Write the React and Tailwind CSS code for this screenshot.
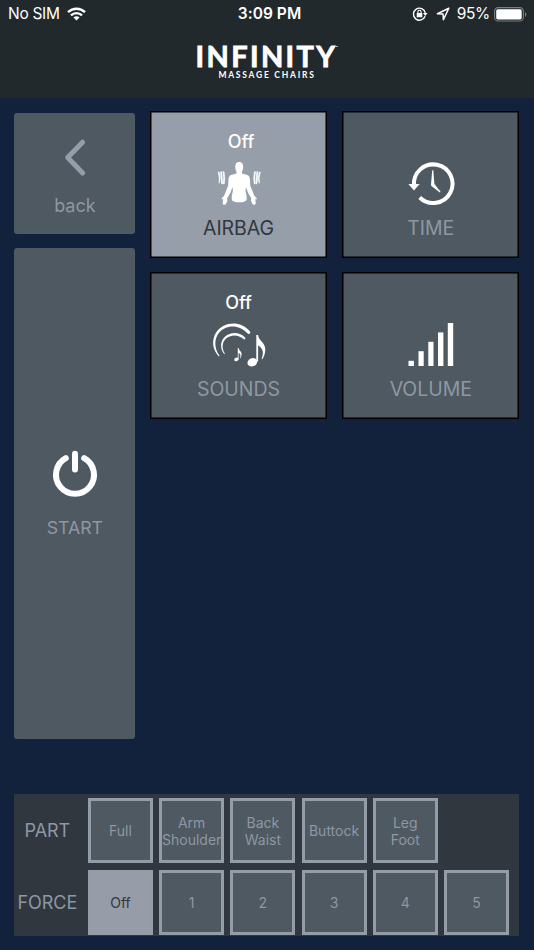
import React, { useState } from "react";

const PARTS = ["Full", "Arm\nShoulder", "Back\nWaist", "Buttock", "Leg\nFoot"];
const FORCES = ["Off", "1", "2", "3", "4", "5"];

function StatusBar() {
  return (
    <div className="grid h-7 grid-cols-3 items-center pl-2 pr-[7px] text-[15.5px] tracking-[-0.3px]">
      <div className="flex items-center gap-[7.5px]">
        <span>No SIM</span>
        <svg width="19" height="14" viewBox="0 0 19 14" fill="none" stroke="currentColor" strokeWidth="2.4">
          <path d="M1 5.2a12.2 12.2 0 0 1 17 0" />
          <path d="M4 8.4a7.8 7.8 0 0 1 11 0" />
          <path d="M9.5 13.4 6.5 10.4a4.2 4.2 0 0 1 6 0z" fill="currentColor" stroke="none" />
        </svg>
      </div>
      <span className="pl-1 text-center font-semibold tracking-[0.05px]">3:09 PM</span>
      <div className="flex items-center justify-end">
        <svg className="mr-[8px]" width="16" height="16" viewBox="0 0 16 16" fill="none" stroke="currentColor" strokeWidth="1.4">
          <path d="M13.1 10.2a6 6 0 1 1 .2-3.4" />
          <path d="M11 7h4.6l-2.3 3z" fill="currentColor" stroke="none" />
          <rect x="4.7" y="7" width="5.6" height="4.2" rx=".5" fill="currentColor" stroke="none" />
          <path d="M5.9 7.2V5.9a1.6 1.6 0 0 1 3.2 0v1.3" strokeWidth="1.1" />
        </svg>
        <svg className="mr-[7px]" width="14" height="14" viewBox="0 0 14 14" fill="none" stroke="currentColor" strokeWidth="1.5" strokeLinejoin="round">
          <path d="M12.8 1.2 1.4 6.7l5.6.4.4 5.7z" />
        </svg>
        <span className="mr-[4px]">95%</span>
        <svg width="33" height="15" viewBox="0 0 33 15">
          <rect x=".6" y=".6" width="28.8" height="13.4" rx="3.6" fill="none" stroke="#7a7f82" strokeWidth="1.1" />
          <rect x="2.2" y="2.2" width="25.5" height="10.2" rx="1.6" fill="#fff" />
          <path d="M31 5v4.8c1.8-.7 1.8-4 0-4.8z" fill="#7a7f82" />
        </svg>
      </div>
    </div>
  );
}

function Header() {
  return (
    <header className="h-[98px] bg-[#22292c] text-white">
      <StatusBar />
      <div className="flex flex-col items-center pt-[16px] font-[Lato,sans-serif]">
        <div className="flex items-start">
          <span className="text-[29px] font-bold leading-[24px] tracking-[2.35px] [-webkit-text-stroke:0.8px_white]">INFINITY</span>
          <span className="-ml-[2px] mt-[2px] w-[3px] border-t border-[#a5a9ab]" />
        </div>
        <span className="mt-[2px] text-[8.5px] font-bold leading-[10px] tracking-[1.75px]">MASSAGE CHAIRS</span>
      </div>
    </header>
  );
}

function AirbagIcon() {
  return (
    <svg width="64" height="52" viewBox="0 0 64 52" fill="#fff">
      <path d="M32.2 5C35 5 36.3 7 36.2 9.8C36.1 12 35.6 13.5 34.9 14.7V16.4L40.4 17.9C42.4 18.6 42.8 20.5 43 23L43.2 28.5L45 33L47.2 38.6L50 41.8L49.2 42.6L48.2 42.1L48.8 46.6L47.6 47.9L45.6 47.2L44 43.8L44.2 41L41.2 36.2L38.9 30L38.5 33.5L39.7 39.5L39.6 42.5C39.2 44.4 36.2 45.3 32.2 45.3S25.2 44.4 24.8 42.5L24.7 39.5L25.9 33.5L25.5 30L23.2 36.2L20.2 41L20.4 43.8L18.8 47.2L16.8 47.9L15.6 46.6L16.2 42.1L15.2 42.6L14.4 41.8L17.2 38.6L19.4 33L21.2 28.5L21.4 23C21.6 20.5 22 18.6 24 17.9L29.5 16.4V14.7C28.8 13.5 28.3 12 28.2 9.8C28.1 7 29.4 5 32.2 5Z" />
      <path d="M11.2 15q1.8 5.3 1 11.2q1.8-5.3-.2-11.2zM13.6 14.7q.3 6.2 1 12.2h.9q-.2-6-.9-12.2zM16 14.7q1.3 6.2.3 12.2h.9q1.2-6-.2-12.2z" stroke="#fff" strokeWidth=".7" />
      <path d="M53.3 15q-1.8 5.3-1 11.2q-1.8-5.3.2-11.2zM50.9 14.7q-.3 6.2-1 12.2h-.9q.2-6 .9-12.2zM48.5 14.7q-1.3 6.2-.3 12.2h-.9q-1.2-6 .2-12.2z" stroke="#fff" strokeWidth=".7" />
    </svg>
  );
}

function TimeIcon() {
  return (
    <svg width="64" height="52" viewBox="0 0 64 52">
      <path d="M15 28.5A19.3 19.3 0 1 1 20.7 40.5" fill="none" stroke="#fff" strokeWidth="4" />
      <path d="M9.4 27h11.2L15 33.6z" fill="#fff" />
      <path d="M33.2 13.3h1.1l1.1 13.7 6.2 7.7-.7.7-8.2-6.2q-.8-.6-.7-1.7z" fill="#fff" />
    </svg>
  );
}

function SoundsIcon() {
  return (
    <svg width="64" height="52" viewBox="0 0 64 52" fill="#fff">
      {/* crescents get thicker towards the big note */}
      <path d="M11.9 38.4C5.2 31.5 4.3 21.5 9.3 14.2 16.8 3.1 33.8 2.4 43 13.4c1.2 1.7-1 3.4-2.3 2.1C32 5.9 18.5 6.4 11.6 15.2 6.9 21.5 7.4 31 12.5 37.6z" />
      <path d="M17.3 36.2c-4.6-5.7-4.1-13.3.6-17.5 5.9-5.3 15.3-4.6 20.2.8 1 1.4-.7 2.5-1.7 1.6-4.7-4.4-11.5-5-16.7-1-4.8 3.7-5.3 10.2-1.8 15.6z" />
      <ellipse cx="45.3" cy="44.3" rx="4.9" ry="4.1" transform="rotate(-22 45.3 44.3)" />
      <path d="M49.3 17h1.8c.4 6 7.2 7.2 7.2 14.5 0 4-1.4 7.7-3.1 9.8l-.6-.5c2.4-5.6 1.6-10.5-3.5-13.2v16h-1.8z" />
      <ellipse cx="29.4" cy="41.4" rx="2.2" ry="1.7" transform="rotate(-22 29.4 41.4)" />
      <path d="M30.8 30h.8c.2 2.5 3 3.2 3 6.3 0 1.6-.6 3.2-1.4 4.1l-.3-.3c1.1-2.3.7-4.2-1.3-5.3v6.6h-.8z" />
    </svg>
  );
}

function VolumeIcon() {
  return (
    <svg width="64" height="52" viewBox="0 0 64 52" fill="#fff">
      <rect x="9.5" y="42.8" width="5.4" height="5.2" />
      <rect x="19.5" y="33.2" width="5.2" height="14.8" />
      <rect x="29.3" y="23.8" width="5.2" height="24.2" />
      <rect x="39" y="14.4" width="5.4" height="33.6" />
      <rect x="48.8" y="5" width="5.4" height="43" />
    </svg>
  );
}

function Tile({ label, icon, status, statusClass = "", active, onClick }) {
  return (
    <button
      onClick={onClick}
      className={`flex h-[147px] flex-col items-center border border-black pt-[16px] shadow-[inset_0_0_0_0.5px_#000] ${
        active ? "bg-[#969ea9] text-[#30373f]" : "bg-[#4f5962] text-[#8e97a3]"
      }`}
    >
      <span className={`h-[28px] text-[18px] font-medium leading-[28px] text-white ${statusClass}`}>{status}</span>
      <span className="mt-[1px]">{icon}</span>
      <span className="mt-[5px] text-[19.5px] leading-[28px] tracking-[-0.05px]">{label}</span>
    </button>
  );
}

function OptionButton({ label, active, onClick }) {
  return (
    <button
      onClick={onClick}
      className={`flex size-[65px] shrink-0 items-center justify-center whitespace-pre border-[3px] border-[#949ca8] text-center text-[14px] leading-[17px] ${
        active ? "bg-[#969ca8] text-[#30373f]" : "bg-[#4f5962] text-[#8e97a3]"
      }`}
    >
      {label}
    </button>
  );
}

function OptionRow({ title, options, selected, onSelect }) {
  return (
    <div className="flex items-center">
      <span className="w-[66px] shrink-0 text-center text-[18px] tracking-[-0.05px]">{title}</span>
      <div className="ml-[7.6px] flex gap-[6.2px]">
        {options.map((option) => (
          <OptionButton
            key={option}
            label={option}
            active={selected === option}
            onClick={() => onSelect(option)}
          />
        ))}
      </div>
    </div>
  );
}

export default function App() {
  const [mode, setMode] = useState("AIRBAG");
  const [part, setPart] = useState(null);
  const [force, setForce] = useState("Off");

  const tiles = [
    { label: "AIRBAG", icon: <AirbagIcon />, status: "Off", statusClass: "pl-[5px]" },
    { label: "TIME", icon: <TimeIcon /> },
    { label: "SOUNDS", icon: <SoundsIcon />, status: "Off" },
    { label: "VOLUME", icon: <VolumeIcon /> },
  ];

  return (
    <div className="flex h-screen flex-col overflow-hidden bg-[#12213c] font-[Inter,sans-serif]">
      <Header />

      <main className="flex gap-[14.5px] pl-[14.4px] pr-[14.6px] pt-[13px]">
        <div className="flex w-[121px] shrink-0 flex-col gap-[14px] pt-[1.6px] text-[#8e97a3]">
          <button className="flex h-[121px] flex-col items-center rounded-[3px] bg-[#4f5962] pt-[25.5px]">
            <svg width="26" height="40" viewBox="0 0 26 40" fill="none" stroke="#959daa" strokeWidth="5" strokeLinecap="round" strokeLinejoin="round">
              <path d="M20.6 4.2 5.7 19.5 20.6 35" />
            </svg>
            <span className="mt-[14.5px] text-[18px] leading-[26px]">back</span>
          </button>
          <button className="flex h-[491px] flex-col items-center rounded-[3px] bg-[#4f5962] pt-[200px]">
            <svg width="48" height="52" viewBox="0 0 48 52" fill="none" stroke="#fff" strokeWidth="6" strokeLinecap="round">
              <path d="M14.8 10.1a19 19 0 1 0 18.4 0" />
              <path d="M24 5.8v15.6" />
            </svg>
            <span className="mt-[15px] text-[17.8px] leading-[26px] tracking-[-0.05px]">START</span>
          </button>
        </div>

        <div className="grid flex-1 grid-cols-2 content-start gap-x-[15px] gap-y-[14px]">
          {tiles.map((tile) => (
            <Tile key={tile.label} {...tile} active={mode === tile.label} onClick={() => setMode(tile.label)} />
          ))}
        </div>
      </main>

      <section className="mb-[14.4px] ml-[14.4px] mr-[14.6px] mt-auto flex h-[142px] flex-col gap-[7px] bg-[#30373f] pt-[4.5px] text-[#8e97a3]">
        <OptionRow title="PART" options={PARTS} selected={part} onSelect={setPart} />
        <OptionRow title="FORCE" options={FORCES} selected={force} onSelect={setForce} />
      </section>
    </div>
  );
}
